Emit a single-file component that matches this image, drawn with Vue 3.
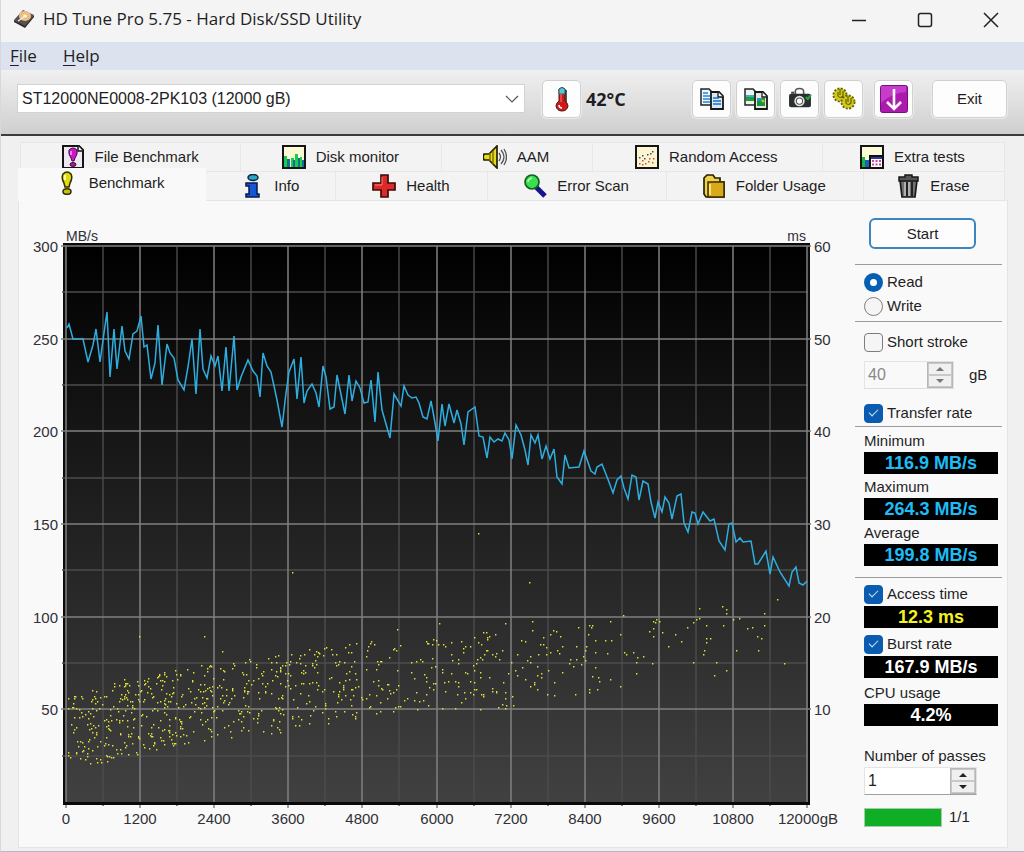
<script setup>
import { ref } from 'vue'

const drive = ref('ST12000NE0008-2PK103 (12000 gB)')
const mode = ref('read')
const shortStroke = ref(false)
const transferRate = ref(true)
const accessTime = ref(true)
const burstRate = ref(true)
const strokeSize = ref('40')
const passes = ref('1')

const upperTabs = [
  { id: 'filebench', label: 'File Benchmark' },
  { id: 'monitor', label: 'Disk monitor' },
  { id: 'aam', label: 'AAM' },
  { id: 'random', label: 'Random Access' },
  { id: 'extra', label: 'Extra tests' }
]
const lowerTabs = [
  { id: 'bench', label: 'Benchmark' },
  { id: 'info', label: 'Info' },
  { id: 'health', label: 'Health' },
  { id: 'scan', label: 'Error Scan' },
  { id: 'folder', label: 'Folder Usage' },
  { id: 'erase', label: 'Erase' }
]
const tabRows = [
  { name: 'upper', tabs: upperTabs },
  { name: 'lower', tabs: lowerTabs }
]

const plot = { x: 66, y: 246, w: 741, h: 556 }
const vLines = Array.from({ length: 21 }, (_, i) => ({
  x: Math.round(plot.x + (plot.w * i) / 20),
  major: i % 2 === 0
}))
const hLines = Array.from({ length: 13 }, (_, i) => ({
  y: Math.round(plot.y + (plot.h * i) / 12),
  major: i % 2 === 0
}))
const xLabels = Array.from({ length: 10 }, (_, i) => ({
  x: Math.round(plot.x + (plot.w * i) / 10),
  text: String(i * 1200)
}))
const yLabels = Array.from({ length: 6 }, (_, i) => ({
  y: Math.round(plot.y + (plot.h * i) / 6) + 6,
  left: String(300 - i * 50),
  right: String(60 - i * 10)
}))

const speedLine =
  '67,328 69,324 73,339 83,339 88,362 93,345 96,329 100,362 104,333 107,312 110,377 114,329 117,369 122,326 125,351 129,359 133,334 137,331 141,316 144,347 147,345 151,379 155,363 158,325 162,385 167,344 170,353 174,358 178,380 184,390 188,367 192,339 196,394 200,329 203,369 207,378 211,356 215,366 218,356 222,391 226,347 229,391 234,336 237,390 241,377 248,360 253,371 257,376 260,397 263,353 267,366 271,372 277,400 282,427 286,393 289,372 294,359 297,399 301,357 304,403 307,391 312,384 316,393 319,407 323,366 326,377 330,409 334,407 337,375 345,414 349,375 352,401 356,381 360,388 364,403 368,402 371,380 375,422 378,372 382,410 390,438 394,394 401,406 404,386 408,395 412,398 416,397 419,403 423,417 427,419 431,401 434,417 438,441 442,404 445,426 449,404 454,423 457,410 461,424 464,445 468,412 475,407 479,436 483,437 487,458 490,437 494,442 498,439 502,441 505,433 509,440 512,459 516,425 521,435 525,450 528,465 531,435 535,443 538,435 542,459 546,446 550,459 554,449 557,477 562,484 565,455 569,468 579,467 584,451 591,471 595,474 597,467 602,464 609,482 613,493 617,480 621,476 624,488 628,499 632,475 636,477 639,500 643,481 648,484 651,502 655,518 658,502 662,512 665,497 669,503 672,519 677,496 681,494 684,523 688,532 692,512 695,513 698,524 703,512 710,521 714,519 719,541 725,550 729,524 732,523 736,542 740,538 743,542 751,541 755,564 758,564 766,551 770,574 773,557 780,572 789,586 792,572 796,567 799,583 803,585 807,581'

const sparseDots =
  '139,636 204,636 222,651 478,533 292,572 397,629 439,623 432,658 435,666 436,640 438,644 443,644 445,646 451,642 461,641 463,648 465,646 463,652 470,646 474,637 483,632 486,632 487,637 487,639 489,636 495,634 505,623 478,642 481,644 451,654 452,660 458,659 458,663 486,650 487,650 484,654 480,657 482,659 477,659 476,663 473,665 492,654 495,656 496,653 499,659 502,650 511,662 442,669 442,672 451,673 465,672 467,673 474,670 480,672 480,677 489,677 508,673 435,683 433,689 444,682 448,681 445,691 455,681 458,682 458,686 470,681 474,682 474,689 476,689 457,694 464,692 470,692 473,694 465,698 461,702 481,694 483,694 483,696 492,688 492,691 496,691 496,692 503,682 505,692 505,698 512,696 502,704 498,707 506,705 505,708 513,705 442,708 455,708 480,709 529,582 532,621 532,630 521,640 525,641 543,637 540,644 543,644 546,647 550,634 553,630 556,631 560,636 562,646 550,652 557,650 559,653 517,654 530,656 527,660 530,662 538,654 546,654 522,667 515,670 517,675 525,679 537,666 537,675 541,673 541,677 548,670 534,682 534,684 530,686 537,689 547,694 554,682 554,695 562,672 569,663 570,659 573,666 576,659 581,664 583,656 585,660 585,650 576,646 578,627 575,694 586,646 588,634 589,625 591,627 592,625 595,640 595,652 605,640 611,640 607,653 610,621 620,634 623,615 595,667 592,676 598,677 599,681 610,679 620,686 589,689 589,692 597,689 624,652 626,654 633,652 637,657 636,662 643,656 652,663 636,673 649,631 653,628 653,636 653,621 655,622 656,619 659,621 662,632 668,646 675,634 681,641 687,627 693,622 696,619 699,618 699,608 706,625 706,638 710,638 706,642 704,650 703,654 693,662 716,662 714,675 726,670 723,625 722,606 726,609 726,613 733,619 739,618 736,650 747,628 752,627 757,636 761,638 758,650 764,625 764,613 777,599 784,663'

// Access-time samples of the inner half of the disk, spread between two envelopes.
function denseDots() {
  const bands = [
    { x: 67, top: 698, bottom: 775, n: 76 },
    { x: 103, top: 684, bottom: 762, n: 94 },
    { x: 140, top: 676, bottom: 754, n: 96 },
    { x: 177, top: 669, bottom: 746, n: 76 },
    { x: 214, top: 662, bottom: 738, n: 62 },
    { x: 251, top: 656, bottom: 736, n: 64 },
    { x: 288, top: 650, bottom: 732, n: 58 },
    { x: 325, top: 647, bottom: 724, n: 54 },
    { x: 362, top: 641, bottom: 718, n: 42 },
    { x: 399, top: 637, bottom: 712, n: 28 },
    { x: 436, top: 634, bottom: 708, n: 0 }
  ]
  let seed = 20231
  const rnd = () => {
    seed = (seed * 16807) % 2147483647
    return seed / 2147483647
  }
  const out = []
  for (let b = 0; b < bands.length - 1; b++) {
    const a = bands[b]
    const c = bands[b + 1]
    for (let i = 0; i < a.n; i++) {
      const t = rnd()
      const top = a.top + (c.top - a.top) * t
      const bottom = a.bottom + (c.bottom - a.bottom) * t
      out.push([Math.round(a.x + (c.x - a.x) * t), Math.round(top + (bottom - top) * rnd())])
    }
  }
  return out
}
const dotPath = sparseDots
  .split(' ')
  .map((p) => p.split(','))
  .concat(denseDots())
  .map(([x, y]) => `M${x} ${y}h1.4v1.4h-1.4z`)
  .join('')
</script>

<template>
  <div class="window">
    <header class="titlebar">
      <svg class="app-icon" viewBox="0 0 22 20" aria-hidden="true">
        <path d="M1 11 10 1l11 5-9 12z" fill="#57504d" />
        <path d="M1 11v2l11 6 9-11V6l-9 11z" fill="#2c2828" />
        <ellipse cx="12" cy="7" rx="6" ry="5" fill="#e9bf83" />
        <ellipse cx="12" cy="7" rx="2" ry="1.5" fill="#fff3dd" />
        <path d="m5 12 6-4" stroke="#eee" stroke-width="1.3" />
      </svg>
      <h1>HD Tune Pro 5.75 - Hard Disk/SSD Utility</h1>
      <div class="window-buttons">
        <button type="button" aria-label="Minimize"><svg viewBox="0 0 16 16"><path d="M1 8.5h14" /></svg></button>
        <button type="button" aria-label="Maximize"><svg viewBox="0 0 16 16"><rect x="1.5" y="1.5" width="13" height="13" rx="2" /></svg></button>
        <button type="button" aria-label="Close"><svg viewBox="0 0 16 16"><path d="m1 1 14 14M15 1 1 15" /></svg></button>
      </div>
    </header>

    <nav class="menubar">
      <button type="button"><u>F</u>ile</button>
      <button type="button"><u>H</u>elp</button>
    </nav>

    <div class="toolbar">
      <div class="drive">
        <select v-model="drive" aria-label="Drive">
          <option>ST12000NE0008-2PK103 (12000 gB)</option>
        </select>
        <svg viewBox="0 0 14 8" aria-hidden="true"><path d="m1 1 6 6 6-6" /></svg>
      </div>
      <button type="button" class="tool" aria-label="Temperature">
        <svg viewBox="3 1 18 26">
          <path d="M9 4q3-3 6 0v12q3 2 3 5-1 5-6 5t-6-5q0-3 3-5z" fill="#d41616" stroke="#4b1515" />
          <path d="M9 4q3-3 6 0v5H9z" fill="#58c8d8" stroke="#31606c" />
          <path d="M16 5v12" stroke="#222" stroke-width="1.5" />
          <path d="M11 9v8" stroke="#ff7b6b" />
          <path d="M9 20q0 3 3 3" stroke="#fff" stroke-width="1.5" fill="none" />
        </svg>
      </button>
      <output class="temperature">42°C</output>
      <div class="tool-group">
        <button type="button" class="tool" aria-label="Copy text">
          <svg viewBox="0 0 24 24">
            <path d="M1 2h8l3 3v13H1z" fill="#eef6fb" stroke="#222" stroke-width="1.5" />
            <path d="M3 6h5M3 9h7M3 12h7M3 15h7" stroke="#2687d8" stroke-width="1.5" />
            <path d="M11 5h8l4 4v13H11z" fill="#d8e8f6" stroke="#181818" stroke-width="1.8" />
            <path d="M18 5v5h5" fill="#fff" stroke="#181818" stroke-width="1.3" />
            <path d="M13 11h6M13 14h8M13 17h8" stroke="#176fc6" stroke-width="1.7" />
          </svg>
        </button>
        <button type="button" class="tool" aria-label="Copy screenshot">
          <svg viewBox="0 0 24 24">
            <path d="M1 2h8l3 3v13H1z" fill="#eff4ec" stroke="#222" stroke-width="1.5" />
            <path d="M2 8h8v6H2z" fill="#1c9f3a" /><path d="M2 8h8v2H2z" fill="#40a9d5" />
            <path d="M11 5h8l4 4v13H11z" fill="#e5e9df" stroke="#181818" stroke-width="1.8" />
            <path d="M18 5v5h5" fill="#fff" stroke="#181818" stroke-width="1.3" />
            <path d="M13 11h8v8h-8z" fill="#179635" /><path d="M13 11h5v3h-5z" fill="#2e91b9" /><circle cx="19" cy="14" r="1.5" fill="#b9c626" />
          </svg>
        </button>
        <button type="button" class="tool" aria-label="Save screenshot">
          <svg viewBox="1 1 23 22">
            <path d="M8 8V5q0-3 4-3t4 3v3" fill="none" stroke="#555" stroke-width="1.5" />
            <rect x="2" y="7" width="21" height="13" rx="2" fill="#2c2f31" />
            <path d="M4 5h3v2H4z" fill="#444" />
            <circle cx="12" cy="14" r="5" fill="#e6e6e6" /><circle cx="12" cy="14" r="3" fill="#fff" stroke="#555" />
            <path d="m18 10 2 2 3-4" stroke="#22a43c" stroke-width="2" fill="none" />
          </svg>
        </button>
        <button type="button" class="tool" aria-label="Options">
          <svg viewBox="0 0 24 24">
            <g stroke="#666200" fill="#d0ca1c">
              <circle cx="8" cy="8" r="6.5" stroke-width="2" stroke-dasharray="2 1.4" />
              <circle cx="8" cy="8" r="5.5" stroke="none" />
              <circle cx="16" cy="15" r="6.5" stroke-width="2" stroke-dasharray="2 1.4" />
              <circle cx="16" cy="15" r="5.5" stroke="none" />
              <path d="M6 5v4q2 3 5 0V4M8 2v6M14 12v4q2 3 5 0v-5M16 9v6" fill="none" stroke-width="1.2" />
            </g>
          </svg>
        </button>
        <button type="button" class="tool spaced" aria-label="Save results">
          <svg class="large" viewBox="0 0 28 28">
            <rect x="0.5" y="0.5" width="27" height="27" rx="2" fill="#ad1bae" stroke="#741180" />
            <path d="M1 2q0-1 1-1h24v6Q12 8 1 18z" fill="#c53dc9" />
            <path d="M14 4v19M7 17l7 7 7-7" fill="none" stroke="#fff" stroke-width="2.6" />
          </svg>
        </button>
        <button type="button" class="tool exit">Exit</button>
      </div>
    </div>

    <main>
      <div class="tabs" role="tablist">
        <div v-for="row in tabRows" :key="row.name" class="tab-row" :class="row.name">
          <button
            v-for="tab in row.tabs"
            :key="tab.id"
            type="button"
            role="tab"
            class="tab"
            :class="{ active: tab.id === 'bench' }"
            :aria-selected="tab.id === 'bench'"
          >
            <svg viewBox="0 0 24 24" aria-hidden="true">
              <template v-if="tab.id === 'filebench'">
                <path d="M2 1h16l4 4v18H2z" fill="#eee9f0" stroke="#151515" stroke-width="2" />
                <path d="M17 1v5h5" fill="#fff" stroke="#151515" stroke-width="1.5" />
                <path d="M8 5q4-4 8 0 1 4-2 8l-1 3h-2l-1-3Q7 9 8 5z" fill="#cf15ca" stroke="#40103f" />
                <ellipse cx="12" cy="19.5" rx="3" ry="2" fill="#a318a0" stroke="#40103f" />
                <path d="M10 6v4" stroke="#ffa0fb" stroke-width="1.5" />
              </template>
              <template v-else-if="tab.id === 'monitor'">
                <rect x="1" y="1" width="22" height="22" fill="#fafbd5" stroke="#151515" stroke-width="2" />
                <path d="M2 11h3v11H2zM9 13h3v9H9zM13 9h3v13h-3zM18 12h2v10h-2z" fill="#19cf49" />
                <path d="M5 14h3v8H5zM11 15h2v7h-2zM16 13h2v9h-2zM20 15h2v7h-2z" fill="#176c9b" />
              </template>
              <template v-else-if="tab.id === 'aam'">
                <path d="M1 9h5l8-8v22l-8-8H1l-1-3z" fill="#e7db20" stroke="#242000" stroke-width="1.7" />
                <path d="M7 8v8M10 6v13" stroke="#7d7400" stroke-width="1.5" />
                <path d="M16 8q3 4 0 8M18 5q6 7 0 14M21 4q5 8 0 16" fill="none" stroke="#555" stroke-width="1.3" />
              </template>
              <template v-else-if="tab.id === 'random'">
                <rect x="1" y="1" width="22" height="22" fill="#fdf5cf" stroke="#151515" stroke-width="2" />
                <path d="M4 12h1.5v1.500H4zM7 10h1.500v1.500H7zM12 9h1.500v1.500h-1.500zM17 6h1.500v1.500h-1.500zM9 13h1.500v1.500H9zM15 8h1.500v1.500h-1.500z" fill="#46437c" />
                <path d="M4 18h1.500v1.500H4zM7 15h1.500v1.500H7zM10 18h1.500v1.500H10zM14 13h1.500v1.500H14zM18 13h1.500v1.500H18zM17 17h1.500v1.500H17zM13 16h1.500v1.500H13zM7 19h1.500v1.500H7z" fill="#d74d36" />
              </template>
              <template v-else-if="tab.id === 'extra'">
                <rect x="1" y="1" width="22" height="22" fill="#fafbd5" stroke="#151515" stroke-width="2" />
                <path d="M2 12h3v10H2z" fill="#16b747" /><path d="M5 15h4v7H5z" fill="#1c62b5" />
                <rect x="10" y="11" width="13" height="12" fill="#fff" stroke="#111" stroke-width="2" />
                <path d="M11 12h11v2H11z" fill="#3631a6" />
                <path d="M12 15h2v2h-2zM15.500 15h2v2h-2zM19 15h2v2h-2zM12 18.500h2v2h-2zM15.500 18.500h2v2h-2zM19 18.500h2v2h-2z" fill="#c6499b" />
              </template>
              <template v-else-if="tab.id === 'bench'">
                <path d="M8 3q4-4 8 0 2 4-1 9l-1 4h-4l-1-4Q6 7 8 3z" fill="#e1da12" stroke="#302d00" stroke-width="1.5" />
                <ellipse cx="12" cy="20.5" rx="4" ry="2.8" fill="#c8c20d" stroke="#302d00" stroke-width="1.5" />
                <path d="M10 4v5" stroke="#ffffa0" stroke-width="2" />
              </template>
              <template v-else-if="tab.id === 'info'">
                <ellipse cx="13" cy="3.5" rx="5" ry="3" fill="#24a6cf" stroke="#10243a" stroke-width="1.5" />
                <path d="M6 9h11v11h2v3H6v-3h3v-8H6z" fill="#1556d8" stroke="#091b4c" stroke-width="1.5" />
              </template>
              <template v-else-if="tab.id === 'health'">
                <path d="M9 1h7v8h7v7h-7v7H9v-7H1V9h8z" fill="#dc2a2a" stroke="#3c0b0b" stroke-width="1.7" />
                <path d="M10 3v8H3" fill="none" stroke="#ff7b70" />
              </template>
              <template v-else-if="tab.id === 'scan'">
                <path d="m13 13 9 9" stroke="#15168b" stroke-width="5" />
                <circle cx="9" cy="8" r="7" fill="#39df50" stroke="#155d20" stroke-width="1.7" />
                <path d="M5 8q0-3 4-4" fill="none" stroke="#b9ffba" stroke-width="1.5" />
              </template>
              <template v-else-if="tab.id === 'folder'">
                <path d="M2 4 5 1h6l2 3h5v4h4v15H4l-2-3z" fill="#efd24c" stroke="#272000" stroke-width="1.7" />
                <path d="M6 8h16v15H6z" fill="#d7a91b" stroke="#3b2d00" stroke-width="1.5" />
                <path d="M8 10v11" stroke="#ffe56b" stroke-width="2" />
              </template>
              <template v-else>
                <path d="M4 6h17l-2 17H6z" fill="#727272" stroke="#191919" stroke-width="1.7" />
                <path d="M3 3h6V1h7v2h6v4H3z" fill="#555" stroke="#191919" stroke-width="1.5" />
                <path d="M9 8v14M13 8v14" stroke="#c4c4c4" stroke-width="1.5" /><path d="M11 8v14M16 8v14" stroke="#222" stroke-width="2" />
              </template>
            </svg>
            <span>{{ tab.label }}</span>
          </button>
        </div>
      </div>

      <section class="panel" role="tabpanel">
        <svg class="chart" viewBox="30 228 812 604" role="img" aria-label="Benchmark">
          <defs>
            <linearGradient id="plot-shade" x1="0" y1="0" x2="0" y2="1">
              <stop offset="0" stop-color="#000" />
              <stop offset="1" stop-color="#414141" />
            </linearGradient>
          </defs>
          <rect x="63" y="243" width="747" height="562" fill="#0c0c0c" />
          <rect x="66" y="246" width="742" height="556" fill="url(#plot-shade)" />
          <g class="minor">
            <template v-for="l in vLines" :key="'v' + l.x"><path v-if="!l.major" :d="`M${l.x} 247V806`" /></template>
            <template v-for="l in hLines" :key="'h' + l.y"><path v-if="!l.major" :d="`M62 ${l.y}H808`" /></template>
          </g>
          <g class="major">
            <template v-for="l in vLines" :key="'V' + l.x"><path v-if="l.major" :d="`M${l.x} 246V808`" /></template>
            <template v-for="l in hLines.slice(0, -1)" :key="'H' + l.y"><path v-if="l.major" :d="`M61 ${l.y}H811`" /></template>
          </g>
          <path d="M63 803.5H810" stroke="#090909" stroke-width="3" />
          <path :d="dotPath" fill="#e4e334" />
          <polyline :points="speedLine" fill="none" stroke="#2eaee0" stroke-width="1.5" />
          <g class="axis">
            <text x="66" y="241" class="unit">MB/s</text>
            <text x="806" y="241" class="unit" text-anchor="end">ms</text>
            <template v-for="l in yLabels" :key="l.left">
              <text x="58" :y="l.y" text-anchor="end">{{ l.left }}</text>
              <text x="814" :y="l.y">{{ l.right }}</text>
            </template>
            <text v-for="l in xLabels" :key="l.text" :x="l.x" y="824" text-anchor="middle">{{ l.text }}</text>
            <text x="838" y="824" text-anchor="end">12000gB</text>
          </g>
        </svg>

        <form class="side" @submit.prevent>
          <button type="submit" class="start">Start</button>
          <hr class="after-start" />
          <div class="modes">
            <label class="option"><input v-model="mode" type="radio" name="mode" value="read" />Read</label>
            <label class="option"><input v-model="mode" type="radio" name="mode" value="write" />Write</label>
          </div>
          <hr />
          <label class="option short"><input v-model="shortStroke" type="checkbox" />Short stroke</label>
          <div class="size-row">
            <div class="spin disabled">
              <input v-model="strokeSize" type="text" aria-label="Short stroke size in gB" disabled />
              <div class="arrows">
                <button type="button" disabled aria-label="Increase size"><svg viewBox="0 0 8 4"><path d="M0 4 4 0l4 4z" /></svg></button>
                <button type="button" disabled aria-label="Decrease size"><svg viewBox="0 0 8 4"><path d="m0 0 4 4 4-4z" /></svg></button>
              </div>
            </div>
            <span>gB</span>
          </div>
          <label class="option transfer"><input v-model="transferRate" type="checkbox" />Transfer rate</label>
          <hr />
          <label class="caption first" for="min">Minimum</label>
          <output id="min" class="value rate">116.9 MB/s</output>
          <label class="caption" for="max">Maximum</label>
          <output id="max" class="value rate">264.3 MB/s</output>
          <label class="caption" for="avg">Average</label>
          <output id="avg" class="value rate">199.8 MB/s</output>
          <hr class="after-values" />
          <label class="option access"><input v-model="accessTime" type="checkbox" />Access time</label>
          <output class="value time">12.3 ms</output>
          <label class="option burst"><input v-model="burstRate" type="checkbox" />Burst rate</label>
          <output class="value">167.9 MB/s</output>
          <label class="caption cpu" for="cpu">CPU usage</label>
          <output id="cpu" class="value">4.2%</output>
          <label class="caption passes-label" for="passes">Number of passes</label>
          <div class="spin passes">
            <input id="passes" v-model="passes" type="text" />
            <div class="arrows">
              <button type="button" aria-label="More passes"><svg viewBox="0 0 8 4"><path d="M0 4 4 0l4 4z" /></svg></button>
              <button type="button" aria-label="Fewer passes"><svg viewBox="0 0 8 4"><path d="m0 0 4 4 4-4z" /></svg></button>
            </div>
          </div>
          <div class="progress-row">
            <progress value="1" max="1" aria-label="Passes done"></progress>
            <span>1/1</span>
          </div>
        </form>
      </section>
    </main>
  </div>
</template>

<style>
body {
  background: #f0f0f0;
}
</style>

<style scoped>
.window {
  display: flex;
  flex-direction: column;
  min-height: 100vh;
  box-sizing: border-box;
  border-left: 1px solid #d5d8dc;
  border-bottom: 1px solid #b3bac4;
  background: #f0f0f0;
  color: #1e1e24;
  font: 15px/20px "Liberation Sans", Arial, sans-serif;
}
button,
input,
select {
  font: inherit;
  color: inherit;
}
button {
  padding: 0;
  border: 0;
  background: none;
}
.titlebar {
  display: flex;
  align-items: flex-start;
  height: 42px;
  padding-left: 12px;
  background: #f4f4f4;
}
.app-icon {
  width: 22px;
  height: 20px;
  margin-top: 9px;
}
h1 {
  flex: 1;
  margin: 0 0 0 8px;
  font: 17px/38px "Open Sans", "Noto Sans", sans-serif;
}
.window-buttons {
  display: flex;
}
.window-buttons button {
  width: 66px;
  height: 38px;
}
.window-buttons svg {
  width: 16px;
  height: 16px;
  vertical-align: middle;
  fill: none;
  stroke: #222;
  stroke-width: 1.5;
}
.menubar {
  display: flex;
  gap: 26px;
  height: 28px;
  padding-left: 9px;
  background: #dce3ee;
  font: 17px/28px "Open Sans", "Noto Sans", sans-serif;
}
.menubar u {
  text-underline-offset: 3px;
}
.toolbar {
  display: flex;
  align-items: flex-start;
  height: 66px;
  box-sizing: border-box;
  padding: 10px 17px 0 16px;
  border-bottom: 2px solid #3c3c3c;
  background: linear-gradient(#f0f0f0, #cfcfcf);
}
.drive {
  position: relative;
  flex: 0 1 508px;
  margin: 4px 17px 0 0;
}
.drive select {
  display: block;
  width: 100%;
  height: 29px;
  padding: 0 24px 0 4px;
  appearance: none;
  border: 1px solid #d2d2d2;
  border-radius: 0;
  background: #fff;
  font-size: 16px;
}
.drive svg {
  position: absolute;
  right: 6px;
  top: 11px;
  width: 14px;
  height: 8px;
  fill: none;
  stroke: #555;
  stroke-width: 1.2;
  pointer-events: none;
}
.tool {
  display: flex;
  align-items: center;
  justify-content: center;
  width: 39px;
  height: 38px;
  border: 1px solid #d0d0d0;
  border-radius: 5px;
  background: #fdfdfd;
  box-shadow: 0 0 0 1px #ebebeb;
}
.tool svg {
  width: 24px;
  height: 26px;
}
.tool svg.large {
  width: 28px;
  height: 28px;
}
.temperature {
  margin-left: 5px;
  font: bold 18px/38px "Open Sans", "Noto Sans", sans-serif;
}
.tool-group {
  display: flex;
  gap: 5px;
  margin-left: auto;
}
.spaced {
  margin: 0 14px 0 6px;
}
.exit {
  width: 75px;
}
main {
  display: flex;
  flex: 1;
  flex-direction: column;
  padding: 6px 16px 3px 17px;
}
.tab-row {
  display: grid;
  margin: 0 3px 0 2px;
}
.upper {
  grid-template-columns: 221fr 201fr 150fr 230fr 182fr;
  height: 29px;
}
.lower {
  grid-template-columns: 186fr 130fr 152fr 178fr 197fr 141fr;
  height: 29px;
}
.tab {
  display: flex;
  align-items: center;
  justify-content: center;
  gap: 10px;
  padding-right: 2px;
  border: 1px solid #e7e7e7;
  border-width: 1px 1px 0 0;
  background: #f3f3f3;
}
.tab:first-child {
  border-left-width: 1px;
}
.tab svg {
  width: 24px;
  height: 24px;
}
.tab.active {
  z-index: 1;
  margin: -3px 0 -1px -2px;
  padding: 0 5px 4px 0;
  border-color: #f9f9f9;
  background: #f9f9f9;
}
.panel {
  display: flex;
  flex: 1;
  align-items: flex-start;
  gap: 13px;
  padding: 0 5px 14px 11px;
  border: 1px solid #e5e5e5;
  background: #f9f9f9;
}
.chart {
  flex: 1;
  min-width: 0;
  margin-top: 27px;
}
.minor {
  stroke: #4c4c4c;
  stroke-width: 1.4;
}
.major {
  stroke: #808080;
  stroke-width: 1.5;
}
.axis {
  fill: #303036;
}
.unit {
  font-size: 14px;
}
.side {
  flex: 0 0 147px;
}
.side > :not(hr) {
  margin-left: 9px;
}
.side hr {
  height: 1px;
  margin: 3px 0 0;
  border: 0;
  background: #9b9b9b;
}
.side .start {
  display: block;
  width: 107px;
  height: 31px;
  margin: 17px 0 0 14px;
  border: 2px solid #3c85bf;
  border-radius: 6px;
  background: #fdfdfd;
}
.side .after-start {
  margin-top: 15px;
}
.modes {
  margin-top: 5px;
}
.option {
  display: flex;
  align-items: center;
  gap: 4px;
  height: 24px;
}
.option input {
  flex: none;
  width: 19px;
  height: 19px;
  margin: 0;
  appearance: none;
  border: 1px solid #7d7d7d;
  border-radius: 4px;
  background: #f5f5f5;
}
.option input[type="radio"] {
  border-radius: 50%;
}
.option input[type="radio"]:checked {
  border: 6px solid #075fb5;
  background: #fff;
}
.option input[type="checkbox"]:checked {
  display: grid;
  place-items: center;
  border-color: #0b5cb0;
  background: #0b5cb0;
}
.option input[type="checkbox"]:checked::after {
  content: "";
  width: 8px;
  height: 4px;
  margin-bottom: 3px;
  border: solid #d3e5f6;
  border-width: 0 0 1px 1px;
  transform: rotate(-45deg);
}
.short {
  margin-top: 8px;
}
.size-row,
.progress-row {
  display: flex;
  align-items: center;
}
.size-row {
  gap: 15px;
  margin-top: 7px;
}
.spin {
  display: flex;
  box-sizing: border-box;
  width: 113px;
  height: 28px;
  border: 1px solid #e4e4e4;
  border-bottom-color: #a0a0a0;
  background: #fff;
}
.spin.disabled {
  width: 90px;
  background: #f9f9f9;
  border-bottom-color: #ddd;
  color: #888;
}
.spin input {
  flex: 1;
  width: 0;
  padding: 0 3px;
  border: 0;
  background: none;
  font-size: 16px;
}
.arrows {
  display: flex;
  flex-direction: column;
  width: 24px;
  border: 1px solid #b7b7b7;
}
.arrows button {
  display: flex;
  align-items: center;
  justify-content: center;
  flex: 1;
  border: 1px solid #c9c9c9;
  background: #f0f0f0;
}
.arrows svg {
  width: 8px;
  height: 4px;
  fill: #222;
}
.disabled .arrows svg {
  fill: #777;
}
.transfer {
  margin-top: 12px;
}
.side .transfer + hr {
  margin-top: 1px;
}
.caption {
  display: block;
  margin-top: 2px;
  line-height: 22px;
}
.caption.first {
  margin-top: 3px;
}
.value {
  display: block;
  width: 134px;
  height: 22px;
  background: #000;
  color: #fff;
  font-weight: bold;
  font-size: 18px;
  line-height: 22px;
  text-align: center;
}
.rate {
  color: #1ebcf5;
}
.time {
  color: #f4f21f;
}
.side .after-values {
  margin-top: 11px;
}
.access,
.burst,
.caption.cpu {
  margin-top: 4px;
}
.caption.passes-label {
  margin-top: 19px;
}
.progress-row {
  gap: 7px;
  margin-top: 12px;
}
progress {
  width: 78px;
  height: 19px;
  appearance: none;
  border: 1px solid #aac8ad;
  box-sizing: border-box;
  background: #e6e6e6;
}
progress::-webkit-progress-bar {
  background: #e6e6e6;
}
progress::-webkit-progress-value {
  background: #0eae25;
}
</style>
